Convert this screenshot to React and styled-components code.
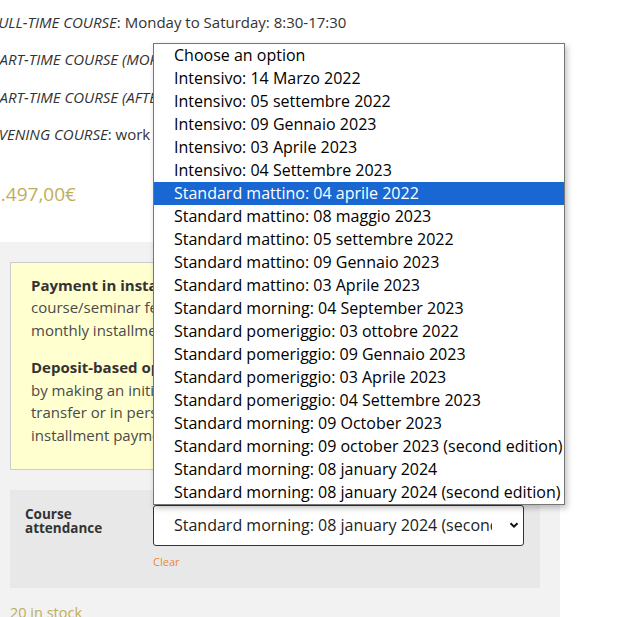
import React from "react";
import styled, { createGlobalStyle } from "styled-components";

const Global = createGlobalStyle`
  html, body { margin: 0; padding: 0; background: #fff; }
  body { font-family: "Open Sans", "Noto Sans", sans-serif; color: #333; overflow: hidden; }
`;

const Page = styled.div`
  position: relative;
  width: 617px;
  height: 617px;
  overflow: hidden;
  background: #fff;
`;

const Column = styled.div`
  width: 560px;
`;

const Schedule = styled.div`
  margin-left: -9px;
  padding-top: 11px;
  display: flex;
  flex-direction: column;
  gap: 15px;
`;

const Line = styled.p`
  margin: 0;
  font-size: 15px;
  line-height: 22.4px;
  color: #333;
  white-space: nowrap;
  em { font-style: italic; }
`;

const Price = styled.div`
  margin: 34px 0 0 -10px;
  font-size: 19px;
  line-height: 28px;
  color: #bfae5a;
`;

const Summary = styled.div`
  margin-top: 34px;
  background: #f2f2f2;
  padding: 20px 20px 0 10px;
  height: 400px;
`;

const Notice = styled.div`
  background: #ffffd0;
  border: 1px solid #cccccc;
  padding: 11px 20px 12px 20px;
  width: 490px;
  box-sizing: border-box;
  height: 208px;
  overflow: hidden;
`;

const NoticePara = styled.p`
  margin: 0 0 15px 0;
  font-size: 15px;
  line-height: 22.5px;
  color: #4a4a4a;
  white-space: nowrap;
  strong { color: #333; font-weight: 700; }
`;

const Variations = styled.div`
  margin-top: 20px;
  background: #e8e8e8;
  width: 530px;
  height: 98px;
  box-sizing: border-box;
  padding: 15px 0 0 15px;
  display: flex;
`;

const Label = styled.div`
  width: 128px;
  font-size: 13.5px;
  line-height: 14px;
  font-weight: 700;
  color: #333;
  padding-top: 2px;
`;

const Field = styled.div`
  display: flex;
  flex-direction: column;
`;

const SelectBox = styled.div`
  width: 371px;
  height: 41px;
  box-sizing: border-box;
  border: 1px solid #333;
  border-radius: 3px;
  background: #fff;
  display: flex;
  align-items: center;
  padding: 0 3px 0 20px;
  font-size: 16px;
  color: #222;
`;

const SelectText = styled.span`
  flex: 1;
  margin-right: 16px;
  overflow: hidden;
  white-space: nowrap;
`;

const Clear = styled.span`
  margin-top: 8px;
  font-size: 11px;
  color: #e8883a;
`;

const Stock = styled.div`
  margin-top: 15px;
  font-size: 14.5px;
  color: #bfae5a;
`;

const Menu = styled.ul`
  position: absolute;
  left: 153px;
  top: 43px;
  width: 412px;
  box-sizing: border-box;
  margin: 0;
  padding: 0;
  list-style: none;
  background: #fff;
  border: 1px solid #767676;
  box-shadow: 2px 3px 6px rgba(0, 0, 0, 0.25);
`;

const Option = styled.li`
  height: 23px;
  line-height: 23px;
  padding-left: 20px;
  font-size: 16px;
  white-space: nowrap;
  color: ${(p) => (p.$selected ? "#fff" : "#000")};
  background: ${(p) => (p.$selected ? "#1967d2" : "transparent")};
`;

const options = [
  "Choose an option",
  "Intensivo: 14 Marzo 2022",
  "Intensivo: 05 settembre 2022",
  "Intensivo: 09 Gennaio 2023",
  "Intensivo: 03 Aprile 2023",
  "Intensivo: 04 Settembre 2023",
  "Standard mattino: 04 aprile 2022",
  "Standard mattino: 08 maggio 2023",
  "Standard mattino: 05 settembre 2022",
  "Standard mattino: 09 Gennaio 2023",
  "Standard mattino: 03 Aprile 2023",
  "Standard morning: 04 September 2023",
  "Standard pomeriggio: 03 ottobre 2022",
  "Standard pomeriggio: 09 Gennaio 2023",
  "Standard pomeriggio: 03 Aprile 2023",
  "Standard pomeriggio: 04 Settembre 2023",
  "Standard morning: 09 October 2023",
  "Standard morning: 09 october 2023 (second edition)",
  "Standard morning: 08 january 2024",
  "Standard morning: 08 january 2024 (second edition)",
];

export default function App() {
  return (
    <Page>
      <Global />
      <Column>
        <Schedule>
          <Line><em>FULL-TIME COURSE</em>: Monday to Saturday: 8:30-17:30</Line>
          <Line><em>PART-TIME COURSE (MORNING)</em>: Monday to Friday</Line>
          <Line><em>PART-TIME COURSE (AFTERNOON)</em>: Monday to Friday</Line>
          <Line><em>EVENING COURSE</em>: work in progress</Line>
        </Schedule>
        <Price>1.497,00€</Price>
        <Summary>
          <Notice>
            <NoticePara>
              <strong>Payment in installments</strong>: the<br />
              course/seminar fee can be paid in<br />
              monthly installments.
            </NoticePara>
            <NoticePara>
              <strong>Deposit-based option</strong>: reserve<br />
              by making an initial deposit by bank<br />
              transfer or in person, with the remaining<br />
              installment payments.
            </NoticePara>
          </Notice>
          <Variations>
            <Label>Course<br />attendance</Label>
            <Field>
              <SelectBox>
                <SelectText>Standard morning: 08 january 2024 (second edition)</SelectText>
                <svg width="12" height="12" viewBox="0 0 12 12">
                  <path d="M2.5 4.2 L6 7.7 L9.5 4.2" fill="none" stroke="#111" strokeWidth="2" />
                </svg>
              </SelectBox>
              <Clear>Clear</Clear>
            </Field>
          </Variations>
          <Stock>20 in stock</Stock>
        </Summary>
      </Column>
      <Menu>
        {options.map((o) => (
          <Option key={o} $selected={o === "Standard mattino: 04 aprile 2022"}>{o}</Option>
        ))}
      </Menu>
    </Page>
  );
}
